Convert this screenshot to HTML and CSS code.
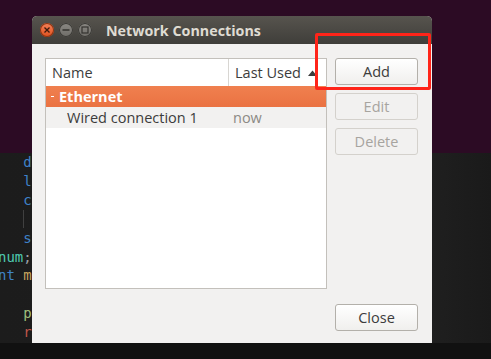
FILE: index.html
```html
<!DOCTYPE html>
<html lang="en">
<head>
    <meta charset="UTF-8">
    <title>Network Connections</title>
    <link rel="stylesheet" href="styles.css">
</head>
<body>
    <div class="desktop">
        <div class="wallpaper"></div>
        <div class="editor">
            <pre class="code"><span class="kw">   d</span>
<span class="kw">   l</span>
<span class="kw">   c</span>
<span class="guide">   </span>
<span class="kw">   s</span>
<span class="ty">num</span><span class="pn">;</span>
<span class="kw">nt </span><span class="fn">m</span>

<span class="st">   p</span>
<span class="rt">   r</span></pre>
        </div>
        <div class="panel"></div>

        <div class="window">
            <div class="titlebar">
                <span class="wbtn close-btn">
                    <svg width="8" height="8" viewBox="0 0 8 8"><path d="M1.5 1.5 L6.5 6.5 M6.5 1.5 L1.5 6.5" stroke="#3c1a0c" stroke-width="1.3"/></svg>
                </span>
                <span class="wbtn">
                    <svg width="8" height="8" viewBox="0 0 8 8"><path d="M0.5 4 H7.5" stroke="#34332f" stroke-width="1.4"/></svg>
                </span>
                <span class="wbtn">
                    <svg width="8" height="8" viewBox="0 0 8 8"><rect x="1" y="1" width="6" height="6" fill="none" stroke="#34332f" stroke-width="1.2"/></svg>
                </span>
                <span class="title">Network Connections</span>
            </div>
            <div class="content">
                <div class="main">
                    <div class="list">
                        <div class="list-head">
                            <div class="col-name">Name</div>
                            <div class="col-used">Last Used
                                <svg class="sort" width="9" height="6" viewBox="0 0 9 6"><path d="M0 6 L4.5 0.5 L9 6 Z" fill="#3c3c3c"/></svg>
                            </div>
                        </div>
                        <div class="group-row"><span class="expander"></span>Ethernet</div>
                        <div class="item-row">
                            <div class="item-name">Wired connection 1</div>
                            <div class="item-used">now</div>
                        </div>
                    </div>
                    <div class="actions">
                        <button class="btn">Add</button>
                        <button class="btn" disabled>Edit</button>
                        <button class="btn" disabled>Delete</button>
                    </div>
                </div>
                <div class="footer">
                    <button class="btn">Close</button>
                </div>
            </div>
        </div>

        <div class="highlight"></div>
    </div>
</body>
</html>
```

FILE: styles.css
```css
body {
    margin: 0;
    background-color: #111111;
    font-family: 'Open Sans', 'Noto Sans', sans-serif;
    overflow: hidden;
}

.desktop {
    position: relative;
    width: 491px;
    height: 359px;
}

.wallpaper {
    height: 153px;
    background-color: #2c0b24;
}

/* エディタの部分 */
.editor {
    height: 190px;
    background: linear-gradient(to right, #1c1c1c 0%, #1f1f1f 88%, #1a1a1a 100%);
    overflow: hidden;
}

.panel {
    height: 16px;
    background-color: #111111;
}

.code {
    margin: 0 0 0 -2px;
    padding-top: 0;
    font-family: 'DejaVu Sans Mono', monospace;
    font-size: 14px;
    line-height: 18.9px;
    color: #d4d4d4;
}

.kw { color: #3f82c8; }
.ty { color: #4ec9b0; }
.pn { color: #9aa0a6; }
.fn { color: #c9a55f; }
.st { color: #9fbf7a; }
.rt { color: #c0564a; }

.guide {
    display: inline-block;
    width: 25px;
    height: 18px;
    border-right: 1px solid #404040;
    vertical-align: top;
}

/* ウィンドウ */
.window {
    position: absolute;
    left: 32px;
    top: 16px;
    width: 400px;
    height: 327px;
    background-color: #f2f1f0;
    border-radius: 5px 5px 0 0;
    overflow: hidden;
    display: flex;
    flex-direction: column;
}

.titlebar {
    height: 28px;
    flex-shrink: 0;
    background: linear-gradient(#57544e, #3f3e3a);
    display: flex;
    align-items: center;
    padding-left: 8px;
    gap: 5px;
}

.wbtn {
    width: 14px;
    height: 14px;
    border-radius: 50%;
    background: linear-gradient(#8a8883, #6f6d68);
    box-shadow: inset 0 0 0 1px #3a3935;
    display: flex;
    align-items: center;
    justify-content: center;
}

.close-btn {
    background: linear-gradient(#f4825a, #e0511e);
    box-shadow: inset 0 0 0 1px #8a3413;
}

.title {
    margin-left: 9px;
    color: #dfdbd2;
    font-size: 14.3px;
    font-weight: bold;
}

.content {
    flex: 1;
    display: flex;
    flex-direction: column;
    padding: 14px 14px 12px 13px;
}

.main {
    flex: 1;
    display: flex;
    gap: 8px;
}

.list {
    width: 280px;
    height: 229px;
    background-color: #fff;
    border: 1px solid #c3c0bb;
    font-size: 14.5px;
    color: #3c3c3c;
}

.list-head {
    display: flex;
    height: 27px;
    align-items: center;
}

.col-name {
    width: 176px;
    padding-left: 6px;
    height: 27px;
    line-height: 27px;
    border-right: 1px solid #d8d6d2;
}

.col-used {
    padding-left: 6px;
    line-height: 27px;
}

.sort {
    margin-left: 3px;
    vertical-align: 2px;
}

.group-row {
    height: 21px;
    line-height: 21px;
    background: linear-gradient(#f0804f, #ea7242);
    color: #fff;
    font-weight: bold;
    padding-left: 5px;
    display: flex;
    align-items: center;
}

.expander {
    width: 3px;
    height: 1px;
    background-color: #fff;
    margin-right: 5px;
}

.item-row {
    display: flex;
    height: 21px;
    line-height: 21px;
    background-color: #f2f1f0;
}

.item-name {
    width: 166px;
    padding-left: 21px;
}

.item-used {
    color: #8c8a85;
}

/* ボタン */
.actions {
    display: flex;
    flex-direction: column;
    gap: 8px;
}

.btn {
    width: 83px;
    height: 27px;
    font-family: 'Open Sans', 'Noto Sans', sans-serif;
    font-size: 14.5px;
    color: #3c3c3c;
    background: linear-gradient(#ffffff, #f0efed);
    border: 1px solid #b3b0aa;
    border-radius: 3px;
    padding: 0;
}

.btn:disabled {
    background: #f2f1f0;
    border-color: #d4d1cc;
    color: #a7a49f;
}

.footer {
    display: flex;
    justify-content: flex-end;
}

.highlight {
    position: absolute;
    left: 315px;
    top: 33px;
    width: 110px;
    height: 51px;
    border: 3px solid #ff2419;
    border-radius: 2px;
}
```
